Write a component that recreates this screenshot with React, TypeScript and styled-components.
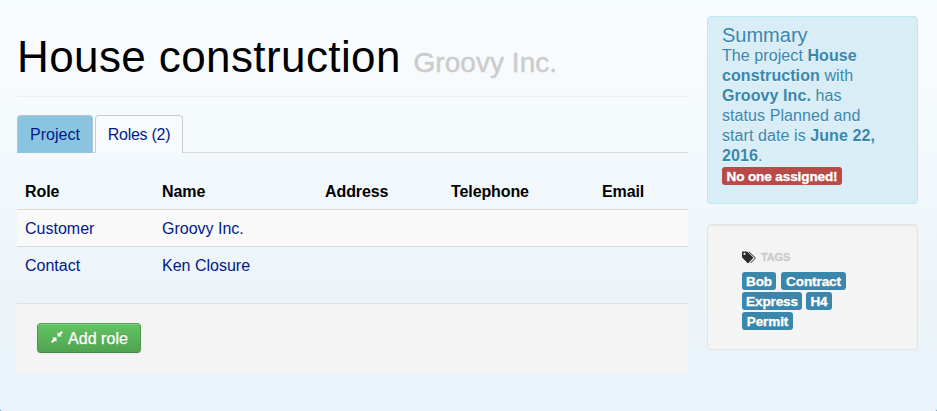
import React from "react";
import styled, { createGlobalStyle } from "styled-components";

const GlobalStyle = createGlobalStyle`
  *, *::before, *::after { box-sizing: border-box; }
  body {
    margin: 0;
    background: #3fa3c6;
    font: 16px/20px "Liberation Sans", Arial, sans-serif;
    color: #000;
  }
`;

const Page = styled.div`
  display: grid;
  grid-template-columns: 671px 211px;
  column-gap: 19px;
  align-items: start;
  height: 411px;
  padding: 16px 19px 0 17px;
  border-radius: 0 0 2px 2px;
  background: linear-gradient(to bottom, #f7fcfe 0%, #f8fbfe 12%, #f5fafd 28%, #f1f7fb 50%, #ecf4f8 72%, #eaf3f9 88%, #e9f3f9 100%);
  overflow: hidden;
`;

const Main = styled.main`
  display: flex;
  flex-direction: column;
`;

const Header = styled.header`
  height: 81px;
  padding-top: 21px;
  border-bottom: 1px solid #eceff0;
`;

const Title = styled.h1`
  margin: 0;
  font-size: 44px;
  line-height: 40px;
  font-weight: 400;
  letter-spacing: 0.4px;
  white-space: nowrap;
`;

const Company = styled.small`
  font-size: 28px;
  line-height: 1;
  letter-spacing: 0.05px;
  color: #ccc;
  -webkit-text-stroke: 0.5px #ccc;
`;

const Tabs = styled.nav`
  display: flex;
  gap: 2px;
  height: 38px;
  margin-top: 18px;
  border-bottom: 1px solid #d9dbdb;
`;

const Tab = styled.a<{ $active?: boolean; $width: number }>`
  display: flex;
  justify-content: center;
  width: ${(p) => p.$width}px;
  height: 38px;
  padding-top: 9px;
  border: 1px solid ${(p) => (p.$active ? "#c8cdd0" : "#b5c5ce")};
  border-bottom: ${(p) => (p.$active ? "0" : "1px solid #8bc4e0")};
  border-radius: 4px 4px 0 0;
  background: ${(p) => (p.$active ? "#f8fbfe" : "#8bc4e0")};
  color: #001a8c;
  letter-spacing: ${(p) => (p.$active ? "-0.25px" : "0")};
  text-decoration: none;
`;

const Table = styled.table`
  width: 671px;
  margin-top: 20px;
  table-layout: fixed;
  border-collapse: collapse;
`;

const HeadCell = styled.th<{ $width: number }>`
  width: ${(p) => p.$width}px;
  height: 36px;
  padding: 9px 8px 7px;
  text-align: left;
  font-weight: 700;
  letter-spacing: -0.1px;
`;

const Row = styled.tr<{ $striped?: boolean }>`
  background: ${(p) => (p.$striped ? "#f9f9f9" : "transparent")};
`;

const Cell = styled.td`
  height: 37px;
  padding: 9px 8px 7px;
  border-top: 1px solid #d9dcde;
`;

const Link = styled.a`
  color: #001a8c;
  text-decoration: none;
`;

const Actions = styled.div`
  height: 70px;
  margin-top: 19px;
  padding: 19px 20px;
  border-top: 1px solid #e0e3e5;
  background: #f4f4f4;
`;

const AddButton = styled.button`
  display: flex;
  align-items: center;
  width: 104px;
  height: 30px;
  padding: 2px 0 0 13px;
  border: 1px solid #499249;
  border-color: #51a351 #4b964b #458845;
  border-radius: 4px;
  background: linear-gradient(to bottom, #62c462, #51a351);
  box-shadow: inset 0 1px 0 rgba(255, 255, 255, 0.2), 0 1px 2px rgba(0, 0, 0, 0.05);
  color: #fff;
  font: 16px/20px "Liberation Sans", Arial, sans-serif;
  text-shadow: 0 -1px 0 rgba(0, 0, 0, 0.25);
  -webkit-text-stroke: 0.3px #fff;
  letter-spacing: 0.05px;
  gap: 5px;
  white-space: nowrap;
`;

const ShrinkIcon = styled.svg`
  flex: none;
  width: 12px;
  height: 12px;
  margin-top: -3px;
`;

const Aside = styled.aside`
  display: flex;
  flex-direction: column;
  gap: 20px;
`;

const Summary = styled.section`
  height: 188px;
  padding: 8px 32px 0 14px;
  border: 1px solid #bce8f1;
  border-radius: 4px;
  background: #d9edf7;
  color: #3a87ad;
  text-shadow: 0 1px 0 rgba(255, 255, 255, 0.5);
`;

const SummaryTitle = styled.h4`
  margin: 0;
  font-size: 20px;
  line-height: 20px;
  font-weight: 400;
`;

const SummaryText = styled.div`
  padding-top: 1px;
  letter-spacing: 0.08px;
`;

const SummaryLine = styled.div`
  white-space: nowrap;
`;

const Label = styled.span<{ $tone: "info" | "important"; $width: number }>`
  display: flex;
  justify-content: center;
  width: ${(p) => p.$width}px;
  height: 18px;
  padding-top: 1px;
  border-radius: 3px;
  background: ${(p) => (p.$tone === "info" ? "#3a87ad" : "#b94a48")};
  color: #fff;
  font-size: 13.536px;
  line-height: 17px;
  font-weight: 700;
  letter-spacing: -0.1px;
  white-space: nowrap;
  text-shadow: 0 -1px 0 rgba(0, 0, 0, 0.25);
  -webkit-text-stroke: 0.35px #fff;
`;

const SummaryStatus = styled.div`
  padding-top: 1px;
`;

const TagBox = styled.section`
  height: 126px;
  padding: 23px 34px 0;
  border: 1px solid #e1e3e4;
  border-radius: 4px;
  background: #f4f4f4;
  box-shadow: inset 0 1px 1px rgba(0, 0, 0, 0.05);
`;

const TagHeading = styled.h5`
  display: flex;
  align-items: center;
  gap: 5px;
  height: 18px;
  margin: 0 0 6px;
  color: #ccc;
  font-size: 11px;
  font-weight: 700;
  letter-spacing: -0.15px;
  -webkit-text-stroke: 0.3px #ccc;
`;

const TagsIcon = styled.svg`
  flex: none;
  width: 14px;
  height: 13px;
`;

const TagLines = styled.div`
  display: flex;
  flex-direction: column;
  gap: 2px;
`;

const TagLine = styled.div<{ $gap: number }>`
  display: flex;
  gap: ${(p) => p.$gap}px;
`;

const columns = [
  { name: "Role", width: 137 },
  { name: "Name", width: 163 },
  { name: "Address", width: 126 },
  { name: "Telephone", width: 151 },
  { name: "Email", width: 94 },
];

const roles = [
  { role: "Customer", name: "Groovy Inc." },
  { role: "Contact", name: "Ken Closure" },
];

const tagLines = [
  { gap: 5, tags: [{ text: "Bob", width: 34 }, { text: "Contract", width: 65 }] },
  { gap: 4, tags: [{ text: "Express", width: 60 }, { text: "H4", width: 26 }] },
  { gap: 4, tags: [{ text: "Permit", width: 51 }] },
];

export default function App() {
  return (
    <>
      <GlobalStyle />
      <Page>
        <Main>
          <Header>
            <Title>
              House construction <Company>Groovy Inc.</Company>
            </Title>
          </Header>
          <Tabs>
            <Tab $width={76}>Project</Tab>
            <Tab $width={88} $active>Roles (2)</Tab>
          </Tabs>
          <Table>
            <thead>
              <tr>
                {columns.map((c) => (
                  <HeadCell key={c.name} $width={c.width}>{c.name}</HeadCell>
                ))}
              </tr>
            </thead>
            <tbody>
              {roles.map((r, i) => (
                <Row key={r.role} $striped={i % 2 === 0}>
                  <Cell><Link>{r.role}</Link></Cell>
                  <Cell><Link>{r.name}</Link></Cell>
                  <Cell />
                  <Cell />
                  <Cell />
                </Row>
              ))}
            </tbody>
          </Table>
          <Actions>
            <AddButton>
              <ShrinkIcon viewBox="0 0 12 12" fill="#fff">
                <path d="M6.5 1.2V5.5H10.8L9.4 4.1L12 1.6L10.4 0L7.9 2.6Z" />
                <path d="M1.2 6.5H5.5V10.8L4.1 9.4L1.6 12L0 10.4L2.6 7.9Z" />
              </ShrinkIcon>
              Add role
            </AddButton>
          </Actions>
        </Main>
        <Aside>
          <Summary>
            <SummaryTitle>Summary</SummaryTitle>
            <SummaryText>
              <SummaryLine>The project <b>House</b></SummaryLine>
              <SummaryLine><b>construction</b> with</SummaryLine>
              <SummaryLine><b>Groovy Inc.</b> has</SummaryLine>
              <SummaryLine>status Planned and</SummaryLine>
              <SummaryLine>start date is <b>June 22,</b></SummaryLine>
              <SummaryLine><b>2016</b>.</SummaryLine>
            </SummaryText>
            <SummaryStatus>
              <Label $tone="important" $width={120}>No one assigned!</Label>
            </SummaryStatus>
          </Summary>
          <TagBox>
            <TagHeading>
              <TagsIcon viewBox="0 0 14 13">
                <path d="M0 1.2Q0 .5.7.5H5.2L11 6.3Q11.5 6.8 11 7.3L6.4 12Q5.9 12.5 5.4 12L0 6.3ZM2.5 1.8A1.1 1.1 0 1 0 2.5 4A1.1 1.1 0 1 0 2.5 1.8Z" fill="#2b2b2b" fillRule="evenodd" />
                <path d="M7 .9L13 6.5Q13.4 7 13 7.5L8.6 12" fill="none" stroke="#2b2b2b" strokeWidth="1" />
              </TagsIcon>
              TAGS
            </TagHeading>
            <TagLines>
              {tagLines.map((line) => (
                <TagLine key={line.tags[0].text} $gap={line.gap}>
                  {line.tags.map((t) => (
                    <Label key={t.text} $tone="info" $width={t.width}>{t.text}</Label>
                  ))}
                </TagLine>
              ))}
            </TagLines>
          </TagBox>
        </Aside>
      </Page>
    </>
  );
}
